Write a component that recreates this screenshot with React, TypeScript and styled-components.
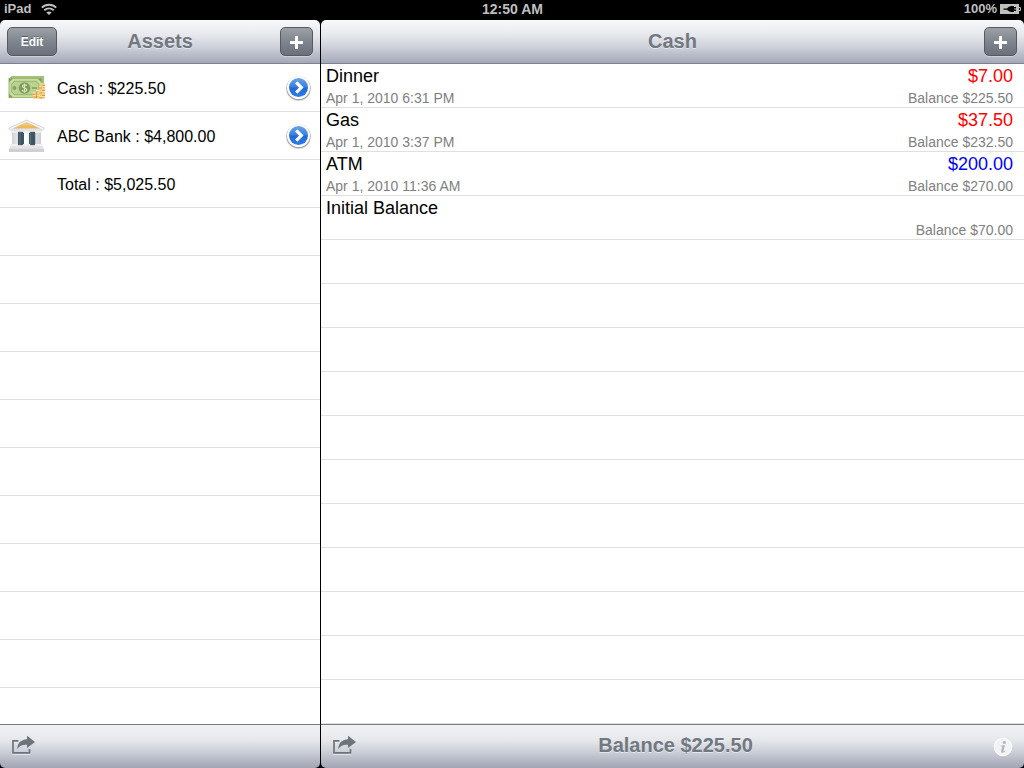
import React from "react";
import styled, { createGlobalStyle } from "styled-components";

const GlobalStyle = createGlobalStyle`
  *, *::before, *::after { box-sizing: border-box; }
  html, body, #root { height: 100%; }
  body {
    margin: 0;
    background: #000;
    color: #000;
    font-family: "Liberation Sans", Arial, Helvetica, sans-serif;
  }
  h1, h2, p, ul { margin: 0; padding: 0; }
  ul { list-style: none; }
  svg { display: block; }
`;

const Screen = styled.div`
  display: flex;
  flex-direction: column;
  min-height: 100%;
`;

const StatusBar = styled.div`
  display: grid;
  grid-template-columns: 1fr auto 1fr;
  align-items: center;
  height: 20px;
  padding: 0 3px 2px 4px;
  color: #bfbfbf;
  font-size: 14px;
  line-height: 18px;
  font-weight: bold;
`;

const StatusGroup = styled.div<{ $end?: boolean }>`
  display: flex;
  align-items: center;
  justify-content: ${(p) => (p.$end ? "flex-end" : "flex-start")};
  gap: ${(p) => (p.$end ? 3 : 10)}px;
  font-size: 13px;
`;

const Split = styled.div`
  flex: 1;
  display: grid;
  grid-template-columns: 320px minmax(0, 1fr);
  gap: 1px;
`;

const Pane = styled.section`
  display: flex;
  flex-direction: column;
  min-width: 0;
`;

const Bar = styled.header`
  display: grid;
  grid-template-columns: 1fr auto 1fr;
  align-items: center;
  height: 44px;
  padding: 0 7px;
  border-bottom: 1px solid #7d8194;
  border-radius: 5px 5px 0 0;
  background: linear-gradient(#f8f9fa, #e7e8ed 35%, #cccfd8 65%, #a4a7b7);
`;

const Toolbar = styled.footer`
  display: grid;
  grid-template-columns: 24px 1fr 20px;
  align-items: center;
  height: 44px;
  padding: 0 11px 4px;
  border-top: 1px solid #7c7c80;
  border-radius: 0 0 5px 5px;
  background: linear-gradient(#f1f2f5, #e6e8ec 35%, #c9ccd5 65%, #a1a4b2);
`;

const BarTitle = styled.h1`
  grid-column: 2;
  padding-bottom: 2px;
  color: #717880;
  font-size: 20px;
  line-height: 24px;
  font-weight: bold;
  text-align: center;
  text-shadow: 0 1px 0 rgba(255, 255, 255, 0.5);
`;

const ToolbarTitle = styled(BarTitle)`
  padding: 0 0 0 2px;
`;

const BarButton = styled.button<{ $wide?: boolean; $end?: boolean }>`
  display: flex;
  align-items: center;
  justify-content: center;
  justify-self: ${(p) => (p.$end ? "end" : "start")};
  grid-column: ${(p) => (p.$end ? 3 : 1)};
  width: ${(p) => (p.$wide ? 50 : 33)}px;
  height: 29px;
  padding: ${(p) => (p.$wide ? 0 : 2)}px 0 0;
  border: 1px solid #565b62;
  border-radius: 5px;
  background: linear-gradient(#9da1a7, #7f858d 50%, #69717b);
  box-shadow: 0 1px 0 rgba(255, 255, 255, 0.35);
  color: #fff;
  font: bold 12px/14px "Liberation Sans", Arial, sans-serif;
  text-shadow: 0 -1px 0 rgba(0, 0, 0, 0.35);
`;

const IconButton = styled.button<{ $end?: boolean }>`
  display: block;
  justify-self: ${(p) => (p.$end ? "end" : "start")};
  grid-column: ${(p) => (p.$end ? 3 : 1)};
  padding: 0;
  border: 0;
  background: none;
`;

const RuledArea = styled.div<{ $row: number }>`
  flex: 1;
  background: repeating-linear-gradient(
    #fff 0,
    #fff ${(p) => p.$row - 1}px,
    #e0e0e0 ${(p) => p.$row - 1}px,
    #e0e0e0 ${(p) => p.$row}px
  );
`;

const AssetRow = styled.li`
  display: grid;
  grid-template-columns: 49px 1fr auto;
  align-items: center;
  height: 48px;
  padding: 0 8px;
  font-size: 16px;
  line-height: 20px;
`;

const AssetLabel = styled.span`
  grid-column: 2;
  padding-top: 2px;
`;

const TransactionRow = styled.li`
  display: grid;
  grid-template-columns: 1fr auto;
  grid-template-rows: 24px 20px;
  height: 44px;
  padding: 0 11px 0 5px;
`;

type Tone = "plain" | "spent" | "moved";
const toneColor: Record<Tone, string> = {
  plain: "#000",
  spent: "#f00",
  moved: "#00f",
};

const Primary = styled.span`
  font-size: 18px;
  line-height: 24px;
`;

const Amount = styled(Primary)<{ $tone?: Tone }>`
  color: ${(p) => toneColor[p.$tone ?? "plain"]};
  text-align: right;
`;

const Secondary = styled.span`
  color: #808080;
  font-size: 14px;
  line-height: 20px;
`;

const WifiIcon = () => (
  <svg width="16" height="12" viewBox="0 0 16 12" fill="none" stroke="#bfbfbf" strokeWidth="1.9" aria-hidden="true">
    <path d="M.8 4.6C4.9.7 11.1.7 15.2 4.6M3.3 7.200c2.700-2.500 6.700-2.500 9.400 0" />
    <path d="M8 12 5.300 9.500c1.500-1.400 3.900-1.400 5.400 0Z" fill="#bfbfbf" stroke="none" />
  </svg>
);

const BatteryIcon = () => (
  <svg width="21" height="10" viewBox="0 0 21 10" aria-hidden="true">
    <path d="M0 0h19v3h1c.7 0 1 .6 1 2s-.3 2-1 2h-1v3H0Z" fill="#bfbfbf" />
    <path d="M3.500 4.500H7L8.500 3 11 2h3v1h2v1.500h-2v1h2V7h-2v1h-3L8.500 7 7 5.700H3.500Z" fill="#000" />
    <path d="M19 4h1v2h-1Z" fill="#000" />
  </svg>
);

const PlusIcon = () => (
  <svg width="13" height="13" viewBox="0 0 13 13" aria-hidden="true">
    <path d="M5 0h3v5h5v3H8v5H5V8H0V5h5Z" fill="#fff" />
  </svg>
);

const ShareIcon = () => (
  <svg width="24" height="20" viewBox="0 0 24 20" aria-hidden="true">
    <path d="M7.500 5.800H2v12.700h16.500V14" fill="none" stroke="#fff" strokeOpacity=".5" strokeWidth="1.600" transform="translate(0 1)" />
    <path d="M7.500 5.800H2v12h16.500V14" fill="none" stroke="#6c737b" strokeWidth="1.700" />
    <path d="M16 .8 24 7 16 13V9.800C11.500 9.400 9 10.500 6.200 14 6.400 8.200 9.800 4.600 16 4.200Z" fill="#6c737b" />
  </svg>
);

const InfoIcon = () => (
  <svg width="20" height="24" viewBox="0 -4 20 24" aria-hidden="true">
    <circle cx="10" cy="10" r="8.800" fill="#f3f3f5" stroke="#fff" strokeWidth="1" />
    <circle cx="11.300" cy="5.500" r="1.600" fill="#b3b5ba" />
    <path d="M7.700 8.800 12 8.100 10.500 13.800c-.2.900.5.700 1.500-.2l.4.400c-1.500 2-4.800 2.600-4.300.2L9.300 9.600l-1.600-.1Z" fill="#b3b5ba" />
  </svg>
);

const DisclosureIcon = () => (
  <svg width="27" height="28" viewBox="0 0 27 28" aria-hidden="true">
    <defs>
      <linearGradient id="discBlue" x2="0" y2="1">
        <stop offset="0" stopColor="#6aa4ec" />
        <stop offset=".49" stopColor="#3a7de0" />
        <stop offset=".51" stopColor="#1e66d8" />
        <stop offset="1" stopColor="#2f7dea" />
      </linearGradient>
    </defs>
    <circle cx="13.500" cy="14.800" r="12.400" fill="#000" fillOpacity=".12" />
    <circle cx="13.500" cy="14.200" r="12.100" fill="#000" fillOpacity=".28" />
    <circle cx="13.500" cy="13.500" r="11.500" fill="#fff" />
    <circle cx="13.500" cy="13.500" r="9.500" fill="url(#discBlue)" />
    <path d="m11.200 8.400 5.100 5.100-5.100 5.100" fill="none" stroke="#fff" strokeWidth="3.200" />
  </svg>
);

const CashIcon = () => (
  <svg width="38" height="26" viewBox="0 0 38 26" aria-hidden="true">
    <path d="M3.500 1H36v17H2V2.500Z" fill="#a3c077" />
    <path d="M.5 3h33.500v20H.5Z" fill="#9dba73" />
    <path d="M1.500 4h31.500v18H1.500Z" fill="#c9dda4" />
    <path d="M6 6.300h22.500a3 3 0 0 0 2.500 2.500v8.400a3 3 0 0 0-2.500 2.500H6a3 3 0 0 0-2.500-2.500V8.800A3 3 0 0 0 6 6.300Z" fill="#bbd290" stroke="#94b16c" strokeWidth=".9" />
    <path d="M1 3.500h4L1 7.500ZM33.500 3.500h-4l4 4ZM1 22.500v-4l4 4Z" fill="#7f9f5b" />
    <circle cx="6.500" cy="13" r="1.900" fill="#82a05f" />
    <path d="M24 13h5" stroke="#82a05f" strokeWidth="1.600" />
    <circle cx="16.500" cy="13" r="5.800" fill="#7f9c5e" />
    <path d="M18.700 10.800c-.6-1.400-4.200-1.400-4.300.5-.1 2.200 4.600 1.300 4.400 3.600-.1 1.900-4.100 1.900-4.800.1M16.500 8.500v9.200" fill="none" stroke="#d7e6b8" strokeWidth="1.200" />
    <path d="M24.500 17.500h4V23.500h-4ZM28 15h4v8.500h-4ZM31.500 8.500H37v15h-5.500Z" fill="#eec270" />
    <path d="M24.500 18h4M24.500 20.500h4M28 15.500h4M28 18h4M28 20.500h4M31.500 9H37M31.500 11.500H37M31.500 14H37M31.500 16.500H37M31.500 19H37M31.500 21.500H37" stroke="#fae5ac" strokeWidth=".9" />
    <path d="M24.500 19.500h2M26.500 22h2M28.500 16.500v6.500M34.500 10.500h2.500M31.500 13h2.500M34 15.500h3M31.500 18h2.500M34 20.500h3M31.500 23h3" stroke="#cd973f" strokeWidth=".9" />
  </svg>
);

const BankIcon = () => (
  <svg width="37" height="34" viewBox="0 0 37 34" aria-hidden="true">
    <defs>
      <linearGradient id="columnShade">
        <stop offset="0" stopColor="#d2d3d9" />
        <stop offset=".45" stopColor="#fff" />
        <stop offset="1" stopColor="#cccdd4" />
      </linearGradient>
    </defs>
    <path d="M4 12h29v15H4Z" fill="#d5d6dc" />
    <path d="M10 13h7v13h-7ZM20.500 13h7v13h-7Z" fill="#3e5662" />
    <path d="M12 13v13M22.500 13v13" stroke="#5b737f" strokeWidth="1" />
    <path d="M4 12.500h5.500V27H4ZM16 12.500h5V27h-5ZM27.500 12.500H33V27h-5.500Z" fill="url(#columnShade)" />
    <path d="M3 11.500h7v2.200H3ZM15 11.500h7v2.200h-7ZM27 11.500h7v2.200h-7ZM3 25h7v2H3ZM15 25h7v2h-7ZM27 25h7v2h-7Z" fill="#f0f0f3" />
    <path d="M2 27h33v2.500H2Z" fill="#e4e4e8" />
    <path d="M1 29.500h35V33H1Z" fill="#cfcfd4" />
    <path d="M18.500.8 36.500 9v1.500L34 12H3L.5 10.500V9Z" fill="#e2e3e8" />
    <path d="m18.500 3 13.500 6.500H5Z" fill="#ebb95f" />
    <path d="m18.500 3 7.500 3.600H11Z" fill="#f1c97b" />
    <path d="M.8 9.200 18.500 1.200l17.700 8" fill="none" stroke="#c6c8d0" strokeWidth=".7" />
    <path d="M2 9.700 18.500 2.300 35 9.700" fill="none" stroke="#fafafb" strokeWidth="1.100" />
  </svg>
);

const assets = [
  { name: "Cash", amount: "$225.50", icon: <CashIcon /> },
  { name: "ABC Bank", amount: "$4,800.00", icon: <BankIcon /> },
];

const transactions: {
  title: string;
  date?: string;
  amount?: string;
  tone?: Tone;
  balance: string;
}[] = [
  { title: "Dinner", date: "Apr 1, 2010 6:31 PM", amount: "$7.00", tone: "spent", balance: "$225.50" },
  { title: "Gas", date: "Apr 1, 2010 3:37 PM", amount: "$37.50", tone: "spent", balance: "$232.50" },
  { title: "ATM", date: "Apr 1, 2010 11:36 AM", amount: "$200.00", tone: "moved", balance: "$270.00" },
  { title: "Initial Balance", balance: "$70.00" },
];

export default function App() {
  return (
    <Screen>
      <GlobalStyle />
      <StatusBar>
        <StatusGroup>
          <span>iPad</span>
          <WifiIcon />
        </StatusGroup>
        <span>12:50 AM</span>
        <StatusGroup $end>
          <span>100%</span>
          <BatteryIcon />
        </StatusGroup>
      </StatusBar>
      <Split>
        <Pane>
          <Bar>
            <BarButton $wide>Edit</BarButton>
            <BarTitle>Assets</BarTitle>
            <BarButton $end aria-label="Add asset">
              <PlusIcon />
            </BarButton>
          </Bar>
          <RuledArea $row={48}>
            <ul>
              {assets.map((a) => (
                <AssetRow key={a.name}>
                  {a.icon}
                  <AssetLabel>
                    {a.name} : {a.amount}
                  </AssetLabel>
                  <IconButton $end aria-label={`Open ${a.name}`}>
                    <DisclosureIcon />
                  </IconButton>
                </AssetRow>
              ))}
              <AssetRow>
                <AssetLabel>Total : $5,025.50</AssetLabel>
              </AssetRow>
            </ul>
          </RuledArea>
          <Toolbar>
            <IconButton aria-label="Share assets">
              <ShareIcon />
            </IconButton>
          </Toolbar>
        </Pane>
        <Pane>
          <Bar>
            <BarTitle>Cash</BarTitle>
            <BarButton $end aria-label="Add transaction">
              <PlusIcon />
            </BarButton>
          </Bar>
          <RuledArea as="main" $row={44}>
            <ul>
              {transactions.map((t) => (
                <TransactionRow key={t.title}>
                  <Primary>{t.title}</Primary>
                  <Amount $tone={t.tone}>{t.amount}</Amount>
                  <Secondary>{t.date}</Secondary>
                  <Secondary>Balance {t.balance}</Secondary>
                </TransactionRow>
              ))}
            </ul>
          </RuledArea>
          <Toolbar>
            <IconButton aria-label="Share transactions">
              <ShareIcon />
            </IconButton>
            <ToolbarTitle as="p">Balance $225.50</ToolbarTitle>
            <IconButton $end aria-label="Info">
              <InfoIcon />
            </IconButton>
          </Toolbar>
        </Pane>
      </Split>
    </Screen>
  );
}
